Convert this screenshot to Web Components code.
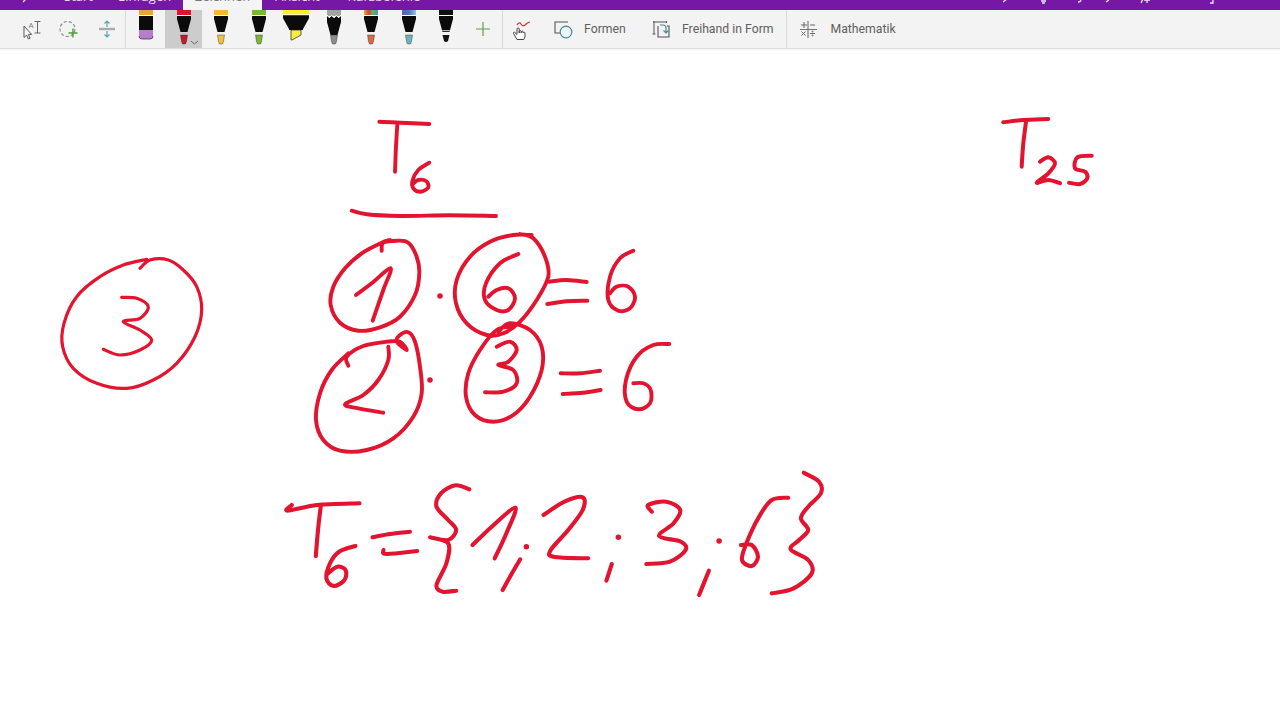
<!DOCTYPE html>
<html lang="de"><head><meta charset="utf-8"><title>Zeichnen</title>
<style>html,body{margin:0;padding:0;width:1280px;height:720px;overflow:hidden;background:#fff;font-family:Roboto,"Liberation Sans",sans-serif}</style>
</head><body>
<note-app>
  <ribbon-tabs></ribbon-tabs>
  <ribbon-bar>
    <rb-btn w="13"></rb-btn>
    <rb-btn w="37.5" icon="cursor"></rb-btn>
    <rb-btn w="37.5" icon="lasso"></rb-btn>
    <rb-btn w="37" icon="space"></rb-btn>
    <rb-sep></rb-sep>
    <rb-btn w="1"></rb-btn>
    <ink-pen kind="tape" top="#e9a33f" tip="#b77ccb"></ink-pen>
    <ink-pen kind="pen" top="#e2132e" tip="#c01a2b" selected></ink-pen>
    <ink-pen kind="pen" top="#f4b92f" tip="#f0c23c"></ink-pen>
    <ink-pen kind="pen" top="#79b92c" tip="#7fb43a"></ink-pen>
    <ink-pen kind="marker" top="#fff01f" tip="#f6ee3c"></ink-pen>
    <ink-pen kind="pen" top="#a2a2a2" tip="#8d8d8d" zig></ink-pen>
    <ink-pen kind="pen" top="url(#rainbow)" tip="#d8694a"></ink-pen>
    <ink-pen kind="pen" top="url(#galaxy)" tip="#6fb4bb"></ink-pen>
    <ink-pen kind="pen" top="#111" tip="#111" plain></ink-pen>
    <rb-btn w="37.5" icon="plus"></rb-btn>
    <rb-sep></rb-sep>
    <rb-btn w="35" icon="touch"></rb-btn>
    <rb-btn w="108" icon="shapes" label="Formen" pad="14" gap="8"></rb-btn>
    <rb-btn w="140" icon="convert" label="Freihand in Form" pad="5.5" gap="6.5"></rb-btn>
    <rb-sep></rb-sep>
    <rb-btn w="120" icon="math" label="Mathematik" pad="9" gap="10.5"></rb-btn>
  </ribbon-bar>
  <ink-canvas></ink-canvas>
</note-app>
<script>
class NoteApp extends HTMLElement{constructor(){super();this.attachShadow({mode:'open'}).innerHTML=`<style>:host{display:flex;flex-direction:column;width:1280px;height:720px;background:#fff}</style><slot></slot>`}}
customElements.define('note-app',NoteApp);

class RibbonTabs extends HTMLElement{constructor(){super();this.attachShadow({mode:'open'}).innerHTML=`<style>
:host{display:flex;height:10px;background:#7717a6;overflow:hidden;flex:none;position:relative;color:#eadcf2;font:13px/18px "Open Sans","Liberation Sans",sans-serif}
.t{height:28px;flex:none;text-align:center;margin-top:-13px;white-space:nowrap}
.a{background:#f4f4f4;color:#777}
svg{position:absolute;left:0;top:0}
</style>
<span class="t" style="width:64px"></span>
<span class="t" style="width:27px">Start</span>
<span class="t" style="width:27px"></span>
<span class="t" style="width:50px">Einfügen</span>
<span class="t" style="width:15px"></span>
<span class="t a" style="width:79px">Zeichnen</span>
<span class="t" style="width:13px"></span>
<span class="t" style="width:45px">Ansicht</span>
<span class="t" style="width:25px"></span>
<span class="t" style="width:78px">Kurzbefehle</span>
<svg width="1280" height="10" fill="none" stroke="#f1e6f6" stroke-width="1.3">
<path d="M26 -1l-3 3"/><path d="M1007 -1l-4 3"/><path d="M1041 1h5M1042 3h3"/><path d="M1081 -1q0 3-3 3"/><path d="M1109 0l-3 2"/><path d="M1141 3l2-4M1147 3v-4M1144 0h6"/><path d="M1210 3h3v-3"/>
</svg>`}}
customElements.define('ribbon-tabs',RibbonTabs);

class RibbonBar extends HTMLElement{constructor(){super();this.attachShadow({mode:'open'}).innerHTML=`<style>:host{display:flex;height:38px;flex:none;background:#f3f3f3;border-bottom:1px solid #dedede;box-shadow:0 1px 2px rgba(0,0,0,.06);position:relative;z-index:1}</style><slot></slot>`}}
customElements.define('ribbon-bar',RibbonBar);

class RbSep extends HTMLElement{constructor(){super();this.attachShadow({mode:'open'}).innerHTML=`<style>:host{display:block;width:1px;flex:none;background:#d9d9d9}</style>`}}
customElements.define('rb-sep',RbSep);

const ICONS={
cursor:`<svg width="24" height="24" viewBox="0 0 24 24" fill="none"><path d="M4 9v11.500l2.600-2.400 1.800 3.900 1.700-.8-1.800-3.800h3.300z" fill="#fff" stroke="#555" stroke-width="1"/><text x="8.500" y="11" font-size="8" fill="#777" font-family="Open Sans">A</text><path d="M14.500 4.500h6M17.500 4.500v11.500M14.500 16h6" stroke="#666" stroke-width="1"/></svg>`,
lasso:`<svg width="24" height="24" viewBox="0 0 24 24" fill="none"><circle cx="10.500" cy="12" r="7.500" stroke="#888" stroke-width="1.100" stroke-dasharray="3.200 2"/><path d="M16 11.500v9M11.500 16h9" stroke="#4d9a3c" stroke-width="1.400"/></svg>`,
space:`<svg width="24" height="24" viewBox="0 0 24 24" fill="none"><path d="M4 12h16" stroke="#aaa" stroke-width="2.400"/><path d="M12 4v6M12 14v6M9.500 6.500L12 4l2.500 2.500M9.500 17.500L12 20l2.500-2.500" stroke="#5aa5ac" stroke-width="1.200"/></svg>`,
plus:`<svg width="24" height="24" viewBox="0 0 24 24" fill="none"><path d="M12 5v14M5 12h14" stroke="#5f9e4e" stroke-width="1.200"/></svg>`,
touch:`<svg width="24" height="24" viewBox="0 0 24 24" fill="none"><path d="M8 8C9 5.500 11 5.500 12 7S14 9.500 16 8 19 5 21 5" stroke="#c8313f" stroke-width="1.200"/><path d="M8 22.500L4.500 16.500c-.6-1.200.8-1.800 1.600-.8L8 17.500V12c0-1.400 2.200-1.400 2.200 0v4-1.500c0-1.200 2-1.200 2 0V16v-1c0-1.200 2-1.200 2 0v1c0-1 1.800-1 1.800 0v4l-1.300 2.500z" fill="#fff" stroke="#444" stroke-width="1"/></svg>`,
shapes:`<svg width="24" height="24" viewBox="0 0 24 24" fill="none"><path d="M16 5H3v11h5" stroke="#555" stroke-width="1.100"/><circle cx="14" cy="15" r="5.800" stroke="#3f8ea0" stroke-width="1.200" fill="#f3f3f3"/></svg>`,
convert:`<svg width="24" height="24" viewBox="0 0 24 24" fill="none"><path d="M1 5h14M2 4v13M.5 17h3M14.500 4v2" stroke="#555" stroke-width="1"/><path d="M6 9v11h11V9h-2" stroke="#555" stroke-width="1.100"/><path d="M8 8h3c2 0 3 1 3 3v4.500M11.500 13.500l2.500 2.500 2.500-2.500" stroke="#3f8ea0" stroke-width="1.200"/></svg>`,
math:`<svg width="24" height="24" viewBox="0 0 24 24" fill="none" stroke="#666" stroke-width="1"><path d="M12 4v17"/><path d="M4 12.500h17" stroke-width=".9"/><path d="M8 5v6M5 8h6M14 8h5M5.500 14.500l4 4M9.500 14.500l-4 4M14 16.500h5"/><circle cx="16.500" cy="14.500" r=".5"/><circle cx="16.500" cy="18.500" r=".5"/></svg>`
};
class RbBtn extends HTMLElement{constructor(){super();this.attachShadow({mode:'open'})}
connectedCallback(){const w=this.getAttribute('w'),l=this.getAttribute('label'),i=this.getAttribute('icon'),p=this.getAttribute('pad')||0,g=this.getAttribute('gap')||0;
this.shadowRoot.innerHTML=`<style>:host{display:flex;align-items:center;flex:none;width:${w}px;height:38px;box-sizing:border-box;justify-content:${l?'flex-start':'center'};padding-left:${p}px;gap:${g}px;font:12.25px Roboto,"Liberation Sans",sans-serif;color:#5f5f5f;white-space:nowrap}
svg{flex:none;display:block}</style>${i?ICONS[i]:''}${l?`<span>${l}</span>`:''}`}}
customElements.define('rb-btn',RbBtn);

class InkPen extends HTMLElement{constructor(){super();this.attachShadow({mode:'open'})}
connectedCallback(){const k=this.getAttribute('kind'),top=this.getAttribute('top'),tip=this.getAttribute('tip'),sel=this.hasAttribute('selected');let b='';
const defs=`<defs><linearGradient id="rainbow"><stop offset="0" stop-color="#e8a33a"/><stop offset=".35" stop-color="#d8413c"/><stop offset=".6" stop-color="#6fae4c"/><stop offset="1" stop-color="#4f8fc4"/></linearGradient><linearGradient id="galaxy"><stop offset="0" stop-color="#6a58b5"/><stop offset=".5" stop-color="#4a78c0"/><stop offset="1" stop-color="#9fc3d8"/></linearGradient></defs>`;
if(k==='tape'){b=`<rect x="12" y="0" width="14" height="5" fill="${top}"/><rect x="12" y="5" width="14" height=".9" fill="#fff"/><rect x="12" y="6" width="14" height="14" fill="#0b0b0b"/><path d="M12 20h14v6q0 3-3 3h-8q-3 0-3-3z" fill="${tip}"/><path d="M12 26q0 3 3 3h8q3 0 3-3" fill="none" stroke="#4a3555" stroke-width=".8"/>`}
else if(k==='marker'){b=`<path d="M6 0h26v4.500H6z" fill="${top}"/><rect x="6" y="4.500" width="26" height=".8" fill="#fff"/><path d="M6 5.300h26v3l-6 10.700v1H12v-1L6 8.300z" fill="#0b0b0b"/><path d="M14 20h10v5l-9 5h-1z" fill="${tip}" stroke="#222" stroke-width=".7"/>`}
else{const plain=this.hasAttribute('plain'),zig=this.hasAttribute('zig');
b=`<path d="M12 0h14v6H12z" fill="${top}"/>`;
b+=zig?`<path d="M12 6l2.300 2 2.300-2 2.400 2 2.400-2 2.300 2 2.300-2v5l-4 2h-6l-4-2z" fill="#0b0b0b"/><path d="M12 5l2.300 2.500 2.300-2 2.400 2 2.400-2 2.300 2 2.300-2.500" fill="none" stroke="#fff" stroke-width="1"/>`:`<rect x="12" y="5" width="14" height="1" fill="#fff"/>`;
b+=`<path d="M12 ${zig?9:6}h14v3l-3.500 13h-7L12 ${zig?12:9}z" fill="#0b0b0b"/>`;
if(plain)b+=`<rect x="15.200" y="20" width="7.600" height="1.200" fill="#bbb"/><path d="M15.500 25h7l-1.500 6q-2 2-4 0z" fill="#111"/>`;
else b+=`<path d="M15.500 25h7l-1 6.500-1 2.500h-3l-1-2.500z" fill="${tip}" stroke="#222" stroke-width=".4"/>`;
if(sel)b+=`<path d="M26 31l3.500 3 3.500-3" fill="none" stroke="#666" stroke-width="1"/>`}
this.shadowRoot.innerHTML=`<style>:host{display:block;flex:none;width:37.5px;height:38px;position:relative;${sel?'background:#cccccc':''}}
svg{display:block}</style><svg width="37.5" height="38" viewBox="0 0 37.5 38">${defs}${b}</svg>`}}
customElements.define('ink-pen',InkPen);

function smooth(p){if(p.length===1)return `M${p[0][0]} ${p[0][1]}h.01`;let d=`M${p[0][0].toFixed(1)} ${p[0][1].toFixed(1)}`;
for(let i=0;i<p.length-1;i++){const a=p[Math.max(i-1,0)],b=p[i],c=p[i+1],e=p[Math.min(i+2,p.length-1)];
d+=`C${(b[0]+(c[0]-a[0])/6).toFixed(1)} ${(b[1]+(c[1]-a[1])/6).toFixed(1)} ${(c[0]-(e[0]-b[0])/6).toFixed(1)} ${(c[1]-(e[1]-b[1])/6).toFixed(1)} ${c[0].toFixed(1)} ${c[1].toFixed(1)}`}return d}
const INK=[
{o:[300,100],sx:3,sy:3,w:3.9,st:[
[[238,65],[300,68],[388,72]],[[292,75],[288,140],[285,215]],
[[388,188],[355,210],[338,240],[340,265],[362,275],[385,262],[378,243],[355,240],[338,252]],
[[155,332],[200,343],[300,348],[450,346],[588,348]],
[[245,452],[250,428],[290,422],[325,428],[350,470],[358,520],[345,585],[300,650],[240,682],[175,692],[120,668],[92,615],[100,560],[135,505],[185,460],[245,428],[270,420]],
[[168,585],[215,550],[272,505],[250,570],[218,662]],
[[420,588]],
[[695,405],[640,405],[570,425],[510,470],[470,540],[468,610],[500,670],[560,705],[610,700],[660,665],[710,600],[745,530],[735,470],[700,415],[660,402]],
[[655,462],[600,490],[558,550],[555,600],[590,630],[625,630],[645,595],[625,565],[590,570],[565,590]],
[[748,545],[800,540],[860,546]],[[742,612],[800,604],[862,602]],
[[1000,452],[960,475],[930,530],[925,600],[955,632],[990,625],[1005,590],[985,560],[950,560],[930,580]],
[[145,797],[140,770],[190,738],[260,725],[300,725],[320,750],[290,725],[300,705],[325,697],[345,725],[360,800],[365,880],[340,950],[280,1015],[200,1050],[120,1052],[70,1020],[48,960],[60,880],[95,810],[145,760]],
[[265,740],[265,780],[235,840],[190,885],[135,913],[175,925],[250,938]],
[[390,840]],
[[595,695],[630,670],[690,690],[725,740],[725,810],[690,890],[640,945],[580,965],[525,945],[498,890],[505,820],[540,750],[590,690],[640,680]],
[[590,740],[630,725],[650,750],[625,785],[595,795],[640,810],[650,850],[610,875],[555,877]],
[[782,820],[840,820],[900,812]],[[788,882],[850,878],[902,870]],
[[1108,732],[1060,735],[1010,770],[978,840],[980,905],[1015,928],[1050,910],[1052,870],[1030,850],[1000,850]]
]},
{o:[270,460],sx:2.75,sy:3,w:4.1,st:[
[[60,135],[48,152],[130,135],[246,130]],[[140,135],[132,210],[126,288]],
[[235,258],[190,275],[165,310],[155,355],[175,378],[205,360],[208,330],[185,320],[160,340]],
[[282,232],[330,222],[385,215]],[[312,270],[320,282],[405,273]],
[[548,88],[510,76],[470,100],[458,140],[490,180],[512,210],[490,240],[440,232],[490,250],[485,310],[458,375],[475,395],[512,392]],
[[557,255],[610,200],[675,143],[650,220],[618,295]],
[[705,260]],[[688,298],[660,350],[640,390]],
[[752,165],[810,125],[860,112],[860,150],[820,210],[772,270],[780,290],[875,295]],
[[958,232]],[[940,312],[925,362]],
[[1050,155],[1040,135],[1090,125],[1128,150],[1110,190],[1070,228],[1130,245],[1143,270],[1100,305],[1035,312]],
[[1235,243]],[[1207,332],[1180,405]],
[[1425,113],[1380,120],[1345,170],[1310,250],[1298,300],[1325,318],[1342,290],[1325,255],[1295,255]],
[[1468,38],[1510,65],[1515,100],[1480,140],[1460,175],[1480,210],[1455,240],[1432,268],[1480,300],[1490,340],[1440,385],[1380,400]]
]},
{o:[40,240],sx:3,sy:3,w:3.2,st:[
[[300,85],[330,60],[385,60],[430,90],[470,140],[485,210],[465,290],[410,370],[340,420],[260,445],[170,430],[100,385],[68,320],[72,250],[110,170],[180,110],[250,75],[320,58]],
[[245,172],[290,175],[325,200],[300,235],[250,245],[300,270],[335,300],[300,330],[240,345],[190,328]]
]},
{o:[990,100],sx:3,sy:3,w:4,st:[
[[40,67],[100,60],[175,57]],[[108,65],[100,130],[95,200]],
[[150,185],[175,172],[195,190],[175,220],[140,248],[175,240],[210,250]],
[[305,167],[262,172],[255,205],[285,215],[292,235],[270,252],[237,248]]
]}];
class InkCanvas extends HTMLElement{constructor(){super();const r=this.attachShadow({mode:'open'});
let paths='';for(const g of INK)for(const s of g.st){const pts=s.map(p=>[g.o[0]+p[0]/g.sx,g.o[1]+p[1]/g.sy]);
paths+=`<path d="${smooth(pts)}" stroke-width="${pts.length===1?5.5:g.w}"/>`}
r.innerHTML=`<style>:host{display:block;flex:1;background:#fff;min-height:0}svg{display:block}</style>
<svg width="1280" height="671" viewBox="0 49 1280 671" fill="none" stroke="#e2142f" stroke-linecap="round" stroke-linejoin="round">${paths}</svg>`}}
customElements.define('ink-canvas',InkCanvas);
</script>
</body></html>
